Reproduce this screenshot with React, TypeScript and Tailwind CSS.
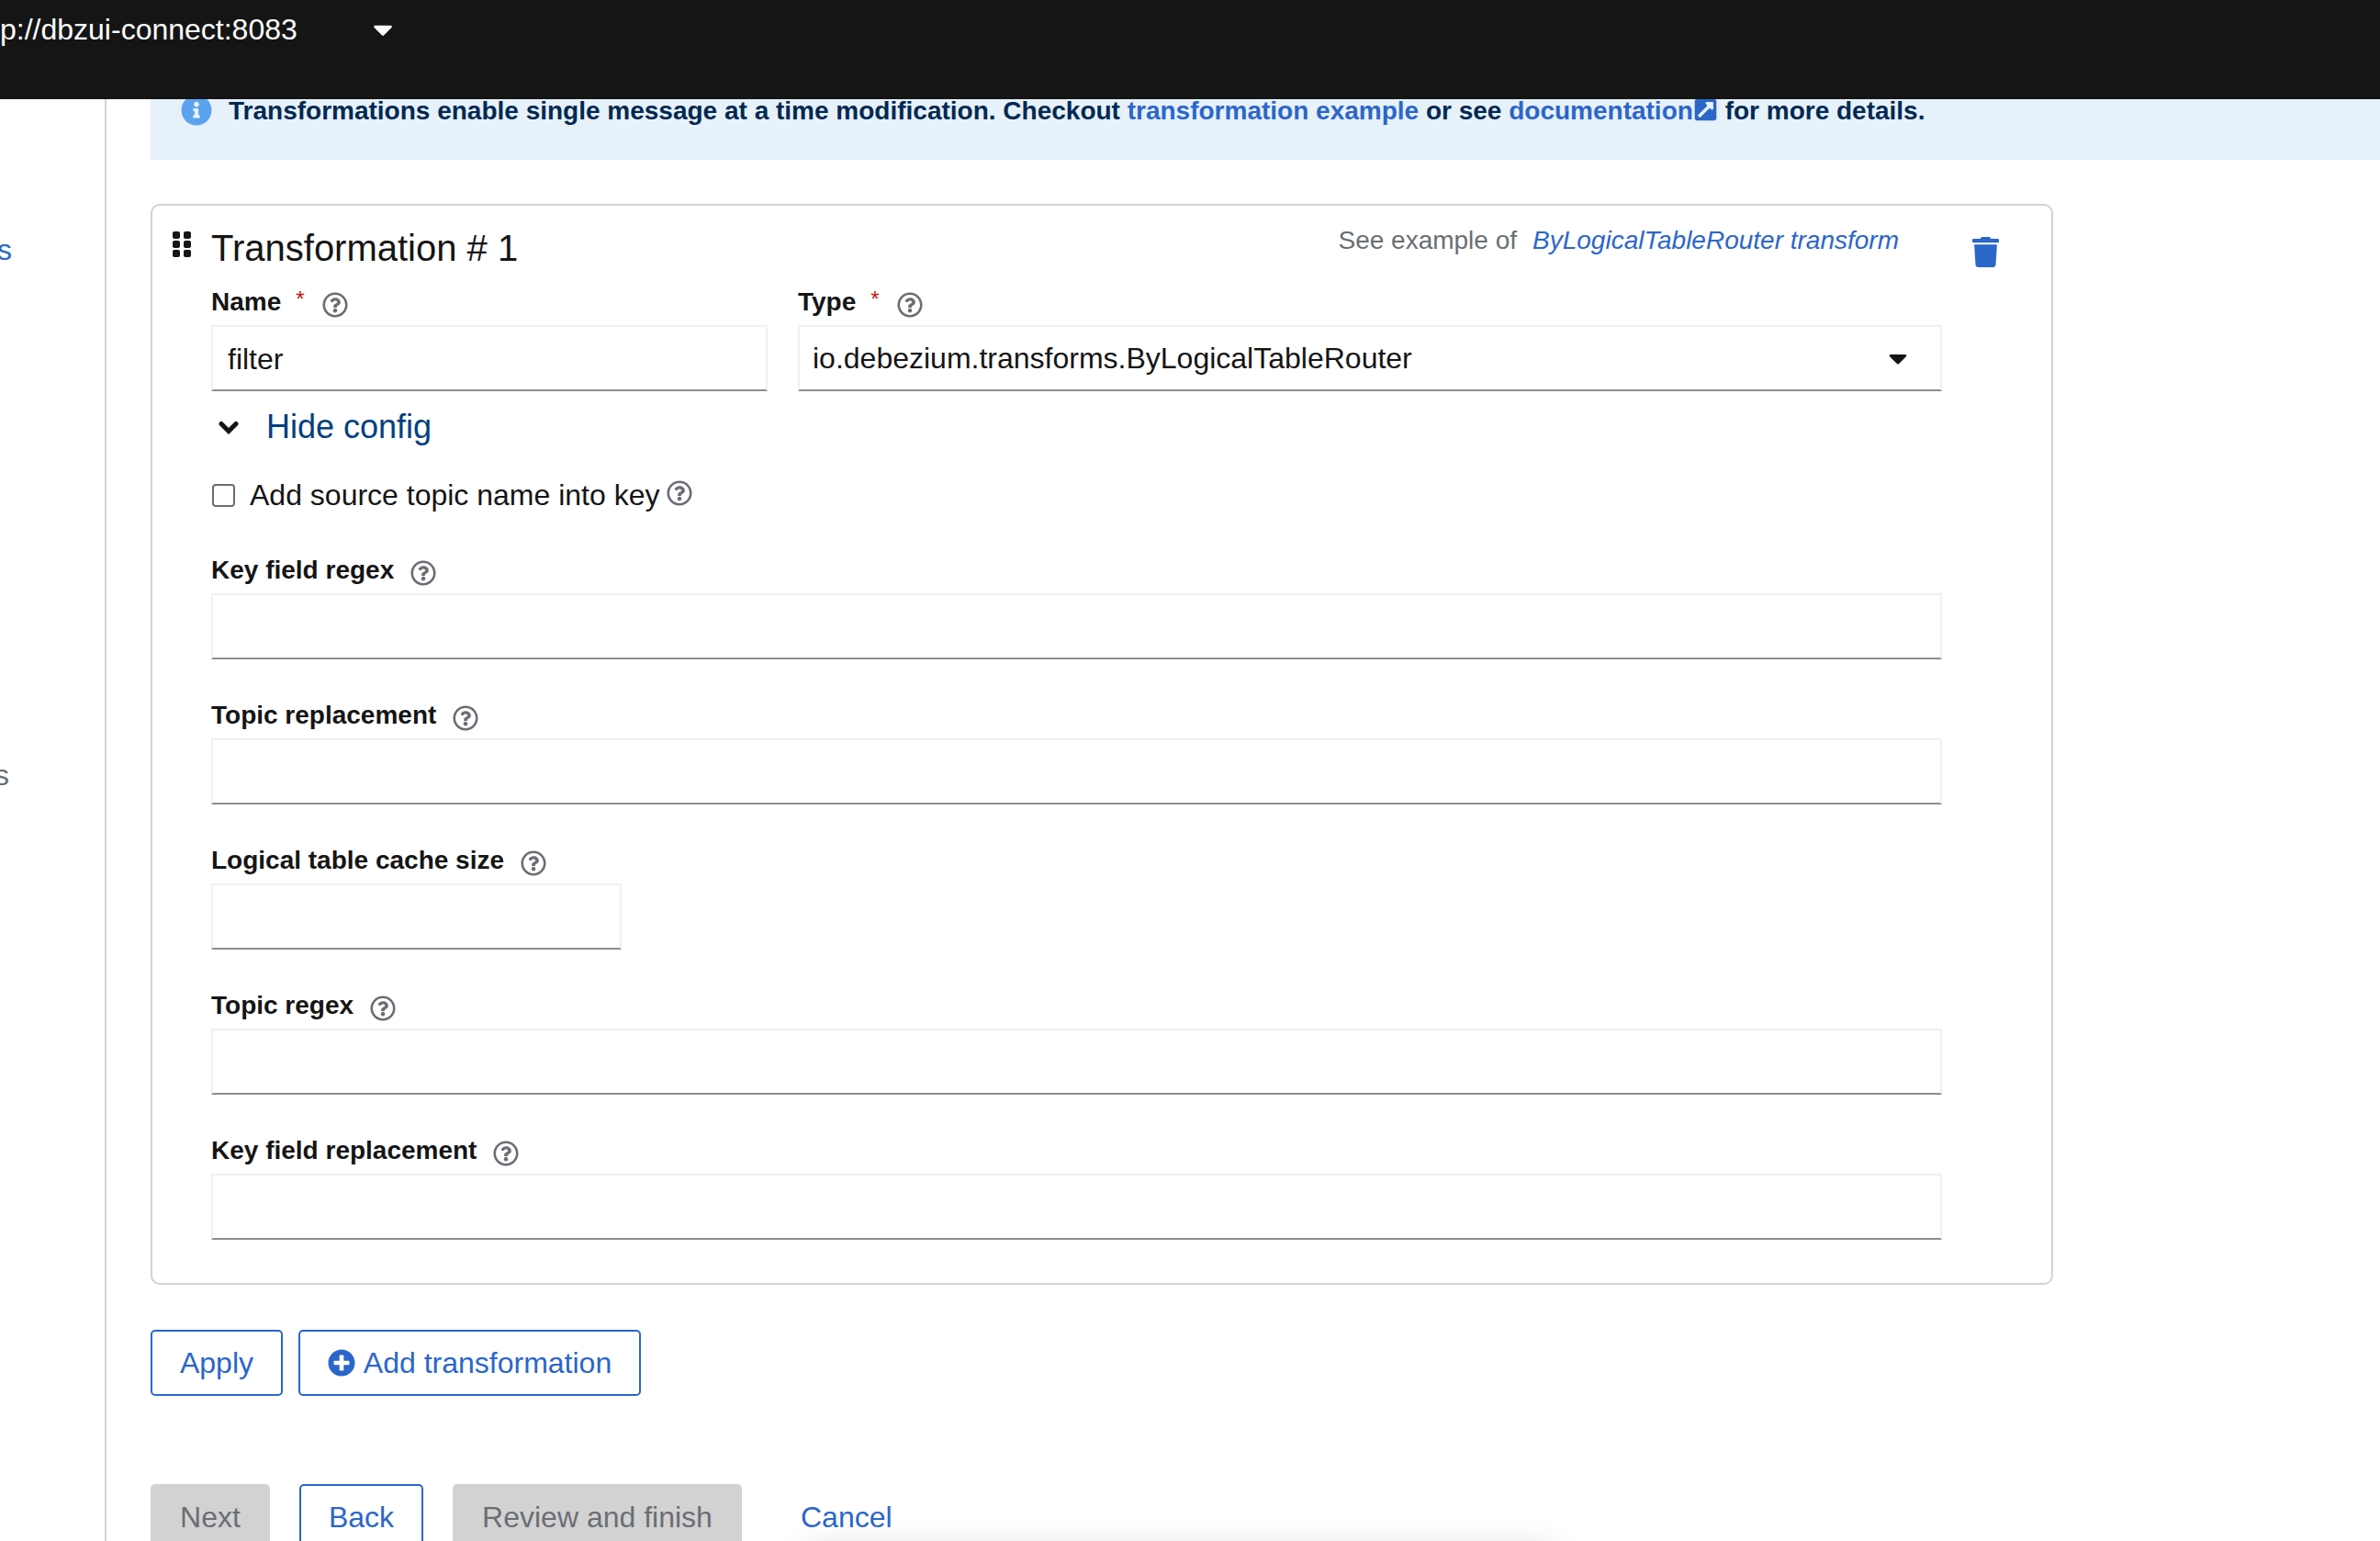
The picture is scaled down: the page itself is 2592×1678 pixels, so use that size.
import { FaCaretDown, FaExternalLinkSquareAlt, FaGripVertical, FaInfoCircle, FaPlusCircle, FaRegQuestionCircle, FaTrash } from "react-icons/fa";

type FieldProps = {
  label: string;
  inputClass?: string;
};

function Help({ className = "" }: { className?: string }) {
  return <FaRegQuestionCircle className={`text-[28px] text-[#6a6e73] ${className}`} />;
}

function Field({ label, inputClass = "w-full" }: FieldProps) {
  return (
    <div className="mt-[44px] first:mt-0">
      <div className="flex h-[34px] items-center">
        <span className="text-[28px] font-bold leading-[34px] text-[#151515]">{label}</span>
        <Help className="ml-[18px] mt-[6px]" />
      </div>
      <div className={`mt-[8px] h-[72px] border-2 border-[#f0f0f0] border-b-[#8a8d90] bg-white ${inputClass}`} />
    </div>
  );
}

export default function App() {
  return (
    <div className="relative flex h-[1678px] w-[2592px] flex-col overflow-hidden bg-white font-['Liberation_Sans',Arial,sans-serif] text-[#151515]">
      <header className="relative z-10 flex h-[108px] shrink-0 items-start bg-[#151515] text-white">
        <span className="mt-[13px] text-[32px] leading-[38px]">p://dbzui-connect:8083</span>
        <FaCaretDown className="ml-[76px] mt-[15px] text-[34px]" />
      </header>

      <div className="flex min-h-0 flex-1">
        <aside className="w-[116px] shrink-0 overflow-hidden border-r-2 border-[#d2d2d2] text-[32px] leading-[38px]">
          <div className="flex w-[13px] justify-end pt-[145px] text-[#2b66c9]">s</div>
          <div className="mt-[534px] flex w-[10px] justify-end text-[#6a6e73]">s</div>
        </aside>

        <main className="min-w-0 flex-1 pl-[48px]">
          <div className="mt-[-10px] flex h-[76px] items-start bg-[#e7f1fa] pl-[33px] text-[28px] font-bold leading-[34px] text-[#002952]">
            <FaInfoCircle className="mt-[5px] shrink-0 text-[34px] text-[#5ba3ee]" />
            <p className="ml-[18px] mt-[6px] whitespace-nowrap">
              Transformations enable single message at a time modification. Checkout{" "}
              <a className="text-[#2b66c9]">transformation example</a> or see{" "}
              <a className="text-[#2b66c9]">documentation</a>
              <FaExternalLinkSquareAlt className="inline align-[-3px] text-[27px] text-[#2b66c9]" /> for more details.
            </p>
          </div>

          <section className="mt-[48px] h-[1177px] w-[2072px] rounded-[10px] border-2 border-[#d2d2d2] pl-[16px] pt-[22px]">
            <div className="flex h-[48px] items-center">
              <FaGripVertical className="mt-[-8px] shrink-0 text-[32px]" />
              <h2 className="ml-[16px] text-[40px] leading-[48px]">Transformation # 1</h2>
              <span className="ml-auto mt-[-16px] text-[28px] leading-[34px] text-[#6a6e73]">See example of</span>
              <a className="ml-[17px] mt-[-16px] text-[28px] italic leading-[34px] text-[#2b66c9]">ByLogicalTableRouter transform</a>
              <FaTrash className="ml-[78px] mr-[55px] mt-[8px] shrink-0 text-[33px] text-[#2b66c9]" />
            </div>

            <div className="ml-[48px] mt-[18px] w-[1885px]">
              <div className="flex gap-[33px]">
                <div className="w-[606px]">
                  <div className="flex h-[34px] items-center">
                    <span className="text-[28px] font-bold leading-[34px]">Name</span>
                    <span className="ml-[16px] mt-[-6px] text-[24px] text-[#c9190b]">*</span>
                    <Help className="ml-[19px] mt-[6px]" />
                  </div>
                  <div className="mt-[8px] flex h-[72px] items-center border-2 border-[#f0f0f0] border-b-[#8a8d90] pl-[16px] pt-[2px] text-[32px]">filter</div>
                </div>
                <div className="flex-1">
                  <div className="flex h-[34px] items-center">
                    <span className="text-[28px] font-bold leading-[34px]">Type</span>
                    <span className="ml-[16px] mt-[-6px] text-[24px] text-[#c9190b]">*</span>
                    <Help className="ml-[19px] mt-[6px]" />
                  </div>
                  <div className="mt-[8px] flex h-[72px] items-center justify-between border-2 border-[#f0f0f0] border-b-[#8a8d90] pl-[14px] pr-[30px] text-[32px]">
                    <span>io.debezium.transforms.ByLogicalTableRouter</span>
                    <FaCaretDown className="text-[32px]" />
                  </div>
                </div>
              </div>

              <div className="mt-[15px] flex h-[48px] items-center">
                <svg viewBox="0 0 22 15" className="ml-[8px] h-[15px] w-[22px] shrink-0" aria-hidden="true">
                  <path d="M3 3.5 L11 11.5 L19 3.5" fill="none" stroke="#151515" strokeWidth="5" strokeLinecap="round" strokeLinejoin="miter" />
                </svg>
                <span className="ml-[30px] text-[36px] leading-[48px] text-[#004080]">Hide config</span>
              </div>

              <label className="mt-[31px] flex h-[38px] items-center">
                <input type="checkbox" className="ml-px h-[25px] w-[25px] appearance-none rounded-[4px] border-2 border-[#6a6e73] bg-white" />
                <span className="ml-[16px] text-[32px] leading-[38px]">Add source topic name into key</span>
                <Help className="ml-[8px] mt-[-4px]" />
              </label>

              <div className="mt-[46px]">
                <Field label="Key field regex" />
                <Field label="Topic replacement" />
                <Field label="Logical table cache size" inputClass="w-[447px]" />
                <Field label="Topic regex" />
                <Field label="Key field replacement" />
              </div>
            </div>
          </section>

          <div className="mt-[49px] flex gap-[17px] text-[32px] leading-[38px] text-[#2b66c9]">
            <button className="flex h-[72px] w-[144px] items-center justify-center rounded-[5px] border-2 border-[#2b66c9]">Apply</button>
            <button className="flex h-[72px] w-[373px] items-center justify-center rounded-[5px] border-2 border-[#2b66c9]">
              <FaPlusCircle className="mr-[9px] text-[30px]" />
              Add transformation
            </button>
          </div>

          <div className="mt-[96px] flex items-start text-[32px] leading-[38px]">
            <button className="flex h-[72px] w-[130px] items-center justify-center rounded-[5px] bg-[#d2d2d2] text-[#6a6e73]">Next</button>
            <button className="ml-[32px] flex h-[72px] w-[135px] items-center justify-center rounded-[5px] border-2 border-[#2b66c9] text-[#2b66c9]">Back</button>
            <button className="ml-[32px] flex h-[72px] w-[315px] items-center justify-center rounded-[5px] bg-[#d2d2d2] text-[#6a6e73]">Review and finish</button>
            <a className="ml-[64px] flex h-[72px] items-center text-[#2b66c9]">Cancel</a>
          </div>
        </main>
      </div>

      {/* shadow of something just below the fold */}
      <div className="absolute left-[880px] top-[1690px] h-[40px] w-[810px] shadow-[0_0_36px_rgba(0,0,0,0.2)]" />
    </div>
  );
}
